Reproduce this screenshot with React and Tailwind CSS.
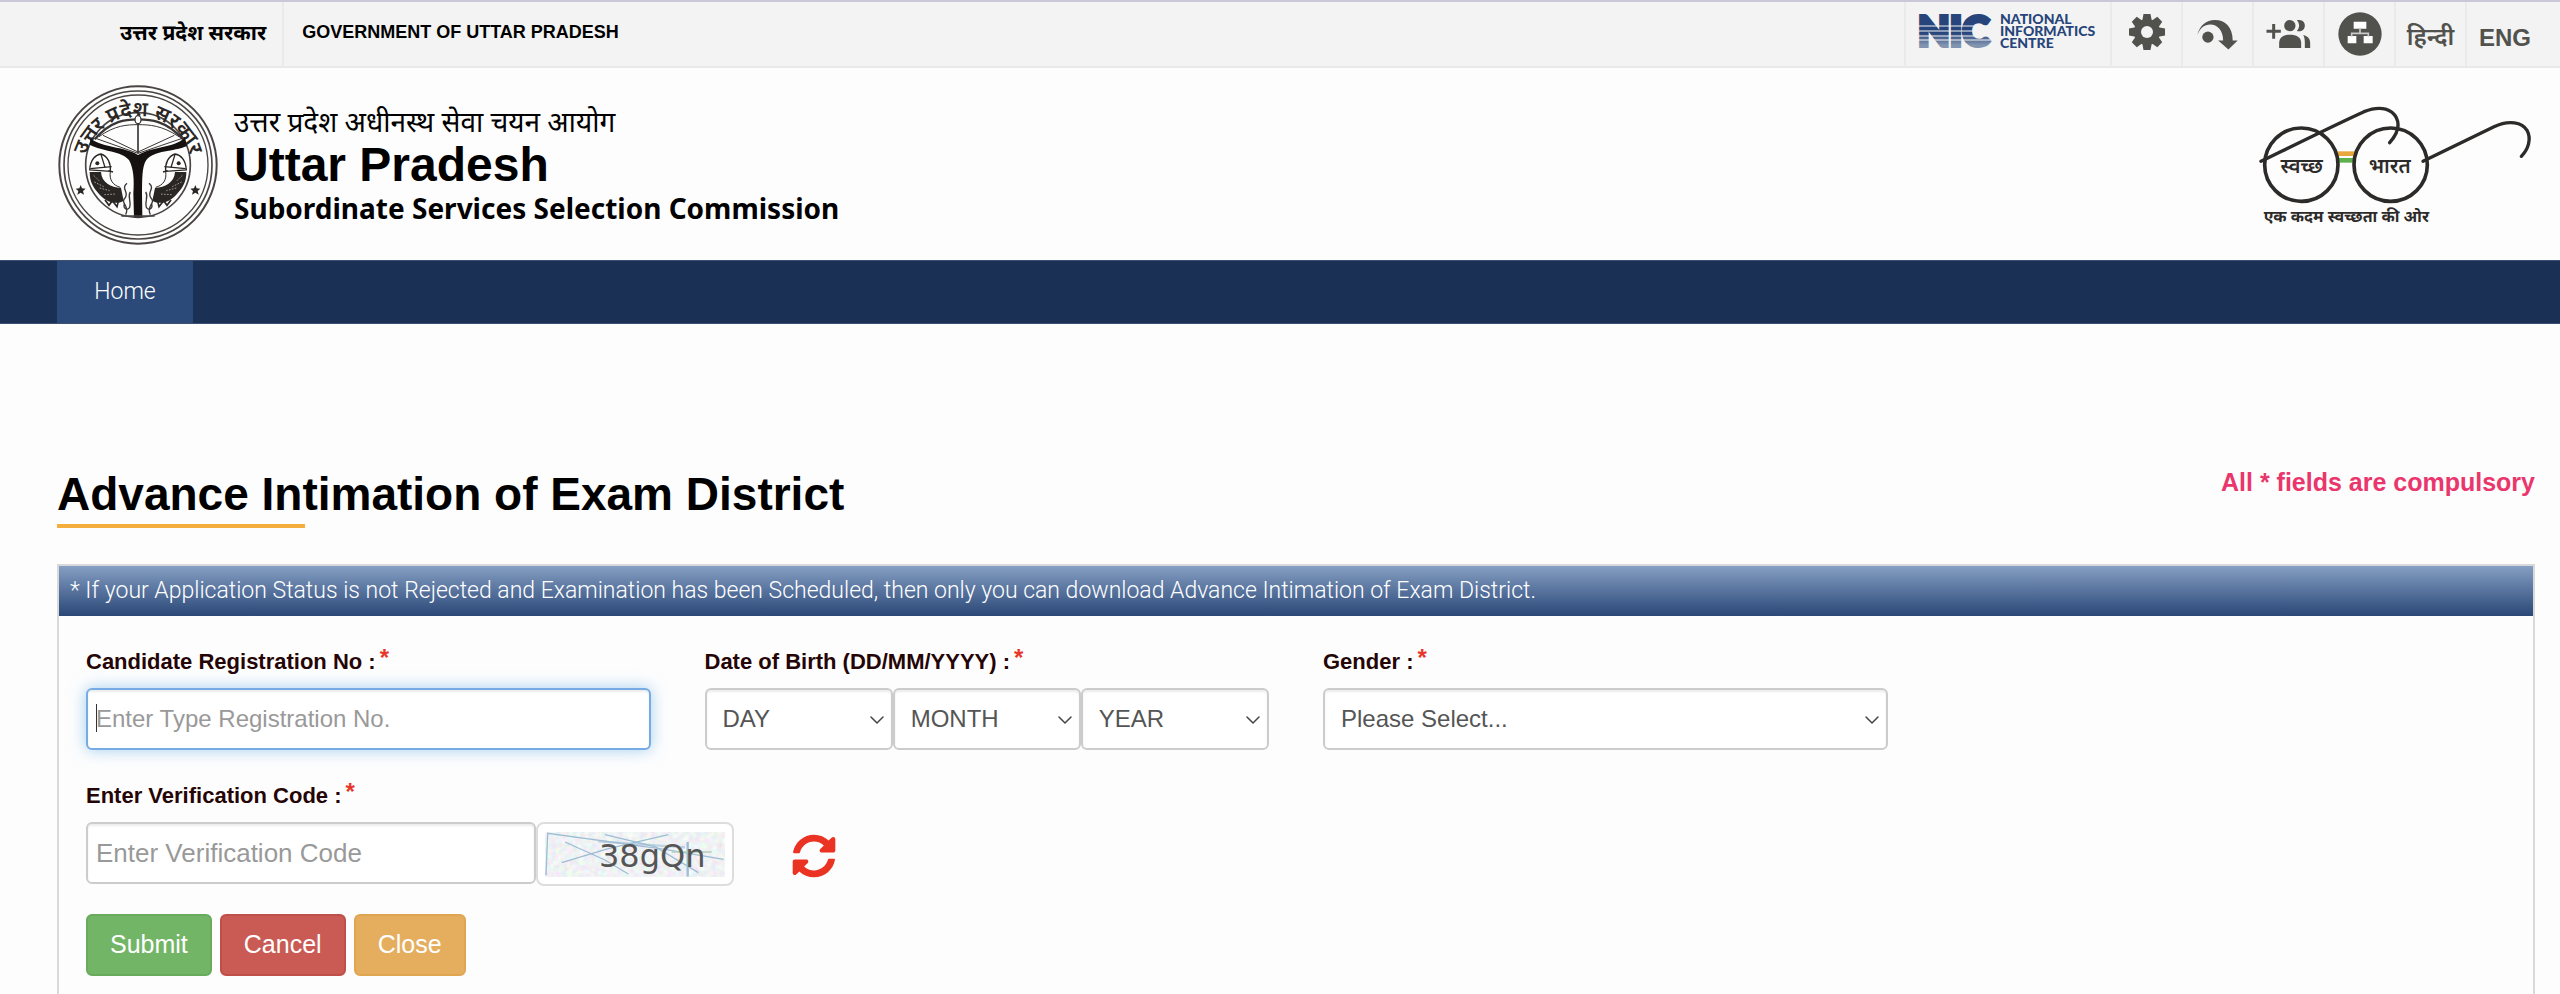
import { FaSyncAlt } from "react-icons/fa";
import { ChevronDown } from "lucide-react";

const devanagari = "font-['Noto_Sans','Noto_Sans_Devanagari',sans-serif]";

const control = "block w-full h-[62px] rounded-md border-2 bg-white outline-none placeholder:text-[#999] placeholder:opacity-100";
const idle = "border-[#ccc] shadow-[inset_0_2px_2px_rgba(0,0,0,0.075)]";
const active = "border-[#77abe4] shadow-[inset_0_2px_2px_rgba(0,0,0,0.075),0_0_16px_rgba(102,175,233,0.6)]";

const actions = [
  { label: "Submit", type: "submit", style: "bg-[#72b566] border-[#68ab5c]" },
  { label: "Cancel", type: "reset", style: "bg-[#c95b54] border-[#bf4f49]" },
  { label: "Close", type: "button", style: "bg-[#e5ae5f] border-[#dfa550]" },
];

function Emblem() {
  return (
    <svg viewBox="55 45 480 480" className="w-40 h-40" role="img" aria-label="उत्तर प्रदेश सरकार">
      <defs>
        <path id="rim" d="M133 300 A162 162 0 0 1 457 300" />
      </defs>
      <g fill="none" stroke="#4a4544">
        <circle cx="295" cy="285" r="236" strokeWidth="6" />
        <circle cx="295" cy="285" r="222" strokeWidth="5" />
        <circle cx="295" cy="285" r="210" strokeWidth="4" />
        <circle cx="295" cy="285" r="157" strokeWidth="5" />
      </g>
      <text fontSize="62" fontWeight="600" fill="#2a2624" textAnchor="middle" className={devanagari}>
        <textPath href="#rim" startOffset="50%">उत्तर प्रदेश सरकार</textPath>
      </text>
      {/* bow and arrow */}
      <g fill="none" stroke="#3a3635" strokeWidth="4">
        <path d="M165 208 C215 150 260 148 295 148 C330 148 378 150 430 208" strokeWidth="7" />
        <path d="M178 200 C225 166 262 164 295 164 C330 164 366 166 418 200" strokeWidth="3" />
        <path d="M168 205 L295 250 L428 205 M190 196 L295 246 L404 196" strokeWidth="3" />
        <path d="M295 130 V250" strokeWidth="5" />
        <ellipse cx="295" cy="149" rx="9" ry="12" fill="#fff" />
      </g>
      {/* rivers */}
      <path
        d="M152 205 C190 235 250 228 295 255 C340 228 400 235 436 203 L442 228 C400 246 345 240 320 270 C306 290 308 330 307 370 L308 442 H283 L281 370 C284 330 282 296 268 270 C245 242 190 245 150 224 Z"
        fill="#141110"
      />
      {[0, 1].map((side) => (
        <g key={side} transform={side ? "translate(590 0) scale(-1 1)" : undefined}>
          <path d="M150 300 C152 268 168 254 184 252 C204 258 214 280 212 304 Z" fill="#fff" stroke="#2a2624" strokeWidth="4" />
          <circle cx="173" cy="280" r="6" fill="#2a2624" />
          <path d="M152 296 L216 290 M184 254 L196 292 M206 302 L220 306" stroke="#2a2624" strokeWidth="4" fill="none" />
          <path d="M150 306 L184 306 C186 338 214 352 244 354 L252 392 C226 408 196 392 180 374 C160 352 150 336 150 306 Z" fill="#2a2624" />
          <path d="M162 316 L178 332 M164 336 L192 350 M180 354 L210 362 M194 374 L230 372" stroke="#a09a96" strokeWidth="3" strokeDasharray="5 4" />
          <path d="M212 304 C208 330 220 346 242 352" stroke="#2a2624" strokeWidth="3" fill="none" />
          <path d="M196 390 L208 406 L218 392 L232 410 L238 386" stroke="#2a2624" strokeWidth="5" fill="none" />
          <path d="M262 340 C242 356 270 366 256 384 C240 400 272 406 258 434 M272 366 C262 380 276 392 270 412 C262 424 250 414 254 402" stroke="#3a3635" strokeWidth="4" fill="none" />
          <path d="M123 345 L127 355 L138 356 L130 363 L133 374 L123 368 L113 374 L116 363 L108 356 L119 355 Z" fill="#2a2624" />
        </g>
      ))}
      <path d="M245 438 H345" stroke="#4a4544" strokeWidth="4" />
    </svg>
  );
}

function SwachhBharat() {
  return (
    <svg viewBox="30 30 825 370" className="w-[275px] h-[124px]" role="img" aria-label="स्वच्छ भारत">
      <path d="M266 178 H320" stroke="#e9a63c" strokeWidth="14" />
      <path d="M266 198 H320" stroke="#5fb04c" strokeWidth="14" />
      <g fill="none" stroke="#2d2b29" strokeLinecap="round">
        <circle cx="157" cy="211" r="110" strokeWidth="11" />
        <circle cx="425" cy="211" r="110" strokeWidth="11" />
        <path d="M36 201 C110 165 240 100 345 52 C400 30 430 48 442 70 C454 94 444 120 422 145" strokeWidth="10" />
        <path d="M522 201 L735 97 C780 76 820 84 834 108 C848 134 838 164 817 186" strokeWidth="10" />
      </g>
      <g fill="#2d2b29" textAnchor="middle" className={devanagari}>
        <text x="158" y="235" fontSize="60" fontWeight="600">स्वच्छ</text>
        <text x="422" y="235" fontSize="61" fontWeight="600">भारत</text>
        <text x="292" y="384" fontSize="48" fontWeight="700">एक कदम स्वच्छता की ओर</text>
      </g>
    </svg>
  );
}

function NicLogo() {
  return (
    <svg viewBox="0 0 186 40" className="w-[186px] h-10 overflow-visible" role="img" aria-label="National Informatics Centre">
      <defs>
        <linearGradient id="nic" x1="0" y1="0" x2="0" y2="1">
          <stop offset="0.55" stopColor="#27457a" />
          <stop offset="0.8" stopColor="#8294b0" />
        </linearGradient>
      </defs>
      <text x="0" y="32" fontSize="41" fontWeight="900" fill="url(#nic)" stroke="url(#nic)" strokeWidth="4" className="font-['Lato',sans-serif]">
        NIC
      </text>
      <path d="M-2 12H77 M-2 17H77 M-2 22H77 M-2 26H77" stroke="#f3f3f3" strokeWidth="1" />
      <g fontSize="14" fontWeight="900" fill="#27457a" className="font-['Lato',sans-serif]">
        <text x="82" y="10">NATIONAL</text>
        <text x="82" y="22">INFORMATICS</text>
        <text x="82" y="34">CENTRE</text>
      </g>
    </svg>
  );
}

function GearIcon() {
  return (
    <svg viewBox="-18 -18 36 36" className="w-9 h-9" fill="#51514d" aria-hidden="true">
      {[0, 45, 90, 135].map((a) => (
        <path key={a} transform={`rotate(${a})`} d="M-3.500 -18 H3.500 L5 -10 V10 L3.500 18 H-3.500 L-5 10 V-10 Z" />
      ))}
      <circle r="13" />
      <circle r="6" fill="#f3f3f3" />
    </svg>
  );
}

function SkipIcon() {
  return (
    <svg viewBox="264 54 124 92" className="w-[41px] h-[31px]" fill="#51514d" aria-hidden="true">
      <path d="M265 102 C272 72 292 56 318 56 C350 56 372 78 372 118 L387 118 L359 145 L328 118 L343 118 C343 88 326 70 304 70 C286 70 274 80 265 102 Z" />
      <circle cx="297" cy="108" r="17" />
    </svg>
  );
}

function AddPeopleIcon() {
  return (
    <svg viewBox="470 58 134 90" className="w-[45px] h-[30px]" fill="#51514d" aria-hidden="true">
      <path d="M488 73h9v17h17v9h-17v18h-9v-18h-17v-9h17z" />
      <circle cx="541" cy="78" r="17" />
      <path d="M562 62 C580 58 587 70 586 79 C585 92 574 97 562 94 C571 84 571 72 562 62 Z" />
      <path d="M509 145 V130 C509 112 524 105 542 105 C560 105 575 112 575 130 V145 Z" />
      <path d="M581 106 C596 110 602 118 602 130 V145 H586 V130 C586 120 585 112 581 106 Z" />
    </svg>
  );
}

function SitemapIcon() {
  return (
    <svg viewBox="0 0 132 132" className="w-11 h-11" aria-hidden="true">
      <circle cx="66" cy="66" r="65" fill="#51514d" />
      <path d="M47 29H85V50H47Z M29 72H55V94H29Z M77 72H104V94H77Z" fill="#fff" />
      <path d="M66 48V64 M41 74V64H91V74" stroke="#c9c9c7" strokeWidth="5" fill="none" />
    </svg>
  );
}

function Captcha() {
  return (
    <svg viewBox="0 0 540 135" className="w-[180px] h-[45px]" role="img" aria-label="Verification code image">
      <filter id="grain">
        <feTurbulence type="fractalNoise" baseFrequency="0.06" numOctaves="2" seed="4" />
        <feColorMatrix values="0.5 0 0 0 0.56  0 0.5 0 0 0.59  0 0 0.4 0 0.66  0 0 0 0 1" />
      </filter>
      <rect width="540" height="135" filter="url(#grain)" opacity="0.65" />
      <g fill="none" stroke="#8fb4cf" strokeWidth="4" opacity="0.85">
        <path d="M3 130 L8 4 L360 52 L536 82" />
        <path d="M60 30 L180 84 L250 126" />
        <path d="M50 92 L190 50 L370 8" />
        <path d="M180 8 L330 44 L460 122" />
        <path d="M160 28 L420 46" strokeWidth="7" opacity="0.6" />
        <path d="M428 30 V134" strokeWidth="7" />
        <path d="M380 60 H500" stroke="#9fcbb5" />
      </g>
      <text x="162" y="105" fontSize="96" fill="#555" className="font-['DejaVu_Sans',sans-serif]">
        38gQn
      </text>
    </svg>
  );
}

function Label({ htmlFor, children }) {
  return (
    <label htmlFor={htmlFor} className="flex h-[42px] gap-1 text-[22px] leading-6 font-bold text-[#250505]">
      <span className="pt-1">{children}</span>
      <span className="text-2xl leading-6 font-bold text-[#e8372a]">*</span>
    </label>
  );
}

function Select({ id, label, option }) {
  return (
    <div className="relative flex-1">
      <select id={id} aria-label={label} className={`${control} ${idle} appearance-none px-4 text-2xl text-[#555]`}>
        <option>{option}</option>
      </select>
      <ChevronDown className="absolute right-1 top-5 w-6 h-6 text-[#444] pointer-events-none" strokeWidth={1.5} />
    </div>
  );
}

function TopBar() {
  const cell = "flex items-center justify-center w-[71px] border-l-2 border-[#eaeaea]";
  return (
    <div className="flex justify-between h-[68px] pl-[120px] bg-[#f3f3f3] border-t-2 border-t-[#cac7d9] border-b-2 border-b-[#e9e9e9]">
      <div className="flex text-lg font-bold text-black">
        <span className={`flex items-center pr-4 pb-1 text-[21px] ${devanagari}`}>उत्तर प्रदेश सरकार</span>
        <span className="flex items-center pl-[18px] pb-1 border-l-2 border-[#eaeaea]">GOVERNMENT OF UTTAR PRADESH</span>
      </div>
      <div className="flex">
        <a href="#nic" className="w-[206px] pl-3 pt-3 border-l-2 border-[#eaeaea]">
          <NicLogo />
        </a>
        <button type="button" aria-label="Settings" className={`${cell} pb-1`}><GearIcon /></button>
        <a href="#main" aria-label="Skip to main content" className={cell}><SkipIcon /></a>
        <a href="#social" aria-label="Social" className={cell}><AddPeopleIcon /></a>
        <a href="#sitemap" aria-label="Sitemap" className={cell}><SitemapIcon /></a>
        <a href="#hi" className={`${cell} pt-1 text-2xl font-semibold text-[#51514d] ${devanagari}`}>हिन्दी</a>
        <a href="#en" className="flex items-center w-[95px] pl-3 pt-2 border-l-2 border-[#eaeaea] text-2xl font-bold text-[#51514d]">
          ENG
        </a>
      </div>
    </div>
  );
}

export default function App() {
  return (
    <div className="min-h-screen flex flex-col bg-[#fdfdfd] font-['Liberation_Sans',Arial,sans-serif]">
      <TopBar />

      <header className="flex justify-between pl-[58px] pr-[26px] h-48">
        <div className="flex pt-[17px]">
          <Emblem />
          <div className="pt-5 pl-4 text-black">
            <p className={`text-[28px] leading-8 ${devanagari}`}>उत्तर प्रदेश अधीनस्थ सेवा चयन आयोग</p>
            <h1 className="text-5xl leading-[56px] font-bold">Uttar Pradesh</h1>
            <p className="text-[28px] leading-[30px] font-bold font-['Noto_Sans',sans-serif]">
              Subordinate Services Selection Commission
            </p>
          </div>
        </div>
        <div className="pt-9">
          <SwachhBharat />
        </div>
      </header>

      <nav className="flex h-16 pl-[57px] bg-[#1a3055] border-y border-[#3d5072]">
        <a href="#home" className="flex items-center w-[136px] justify-center bg-[#2c4a79] text-[23px] font-light text-white font-['Roboto',sans-serif]">
          Home
        </a>
      </nav>

      <main id="main" className="flex flex-col grow pl-[57px] pr-[25px] pt-[140px]">
        <div className="flex justify-between">
          <h2 className="text-[46px] leading-[60px] font-bold text-black">Advance Intimation of Exam District</h2>
          <p className="text-[25px] leading-9 font-bold text-[#e9366c]">All * fields are compulsory</p>
        </div>
        <div className="w-[248px] h-1 bg-[#f3ae3d]" />

        <form className="grow mt-9 border-2 border-b-0 border-[#d9d9d9]">
          <p className="h-[50px] pl-[11px] text-[23px] leading-[50px] font-light text-white bg-linear-to-b from-[#869fc3] to-[#2b4877] font-['Roboto',sans-serif]">
            * If your Application Status is not Rejected and Examination has been Scheduled, then only you can download Advance Intimation of Exam District.
          </p>

          <div className="grid grid-cols-4 pt-[30px]">
            <div className="px-[27px]">
              <Label htmlFor="regno">Candidate Registration No :</Label>
              <div className="relative">
                <input id="regno" type="text" placeholder="Enter Type Registration No." className={`${control} ${active} px-2 text-2xl`} />
                <span className="absolute left-[10px] top-4 w-px h-7 bg-[#333]" />
              </div>
            </div>
            <div className="px-[27px]">
              <Label htmlFor="day">Date of Birth (DD/MM/YYYY) :</Label>
              <div className="flex">
                <Select id="day" label="Day" option="DAY" />
                <Select id="month" label="Month" option="MONTH" />
                <Select id="year" label="Year" option="YEAR" />
              </div>
            </div>
            <div className="px-[27px]">
              <Label htmlFor="gender">Gender :</Label>
              <div className="flex">
                <Select id="gender" label="Gender" option="Please Select..." />
              </div>
            </div>
          </div>

          <div className="px-[27px] pt-[30px]">
            <Label htmlFor="code">Enter Verification Code :</Label>
            <div className="flex items-start">
              <div className="w-[450px]">
                <input id="code" type="text" placeholder="Enter Verification Code" className={`${control} ${idle} px-2 text-[26px]`} />
              </div>
              <div className="flex items-center justify-center w-[198px] h-16 rounded-lg border-2 border-[#ddd] bg-white">
                <Captcha />
              </div>
              <button type="button" aria-label="Refresh code" className="ml-[58px] mt-3 text-[#ea3323]">
                <FaSyncAlt className="w-11 h-11" />
              </button>
            </div>
          </div>

          <div className="flex gap-2 px-[27px] pt-7">
            {actions.map((a) => (
              <button key={a.label} type={a.type} className={`h-[62px] px-[22px] rounded-md border-2 text-[25px] text-white ${a.style}`}>
                {a.label}
              </button>
            ))}
          </div>
        </form>
      </main>
    </div>
  );
}
